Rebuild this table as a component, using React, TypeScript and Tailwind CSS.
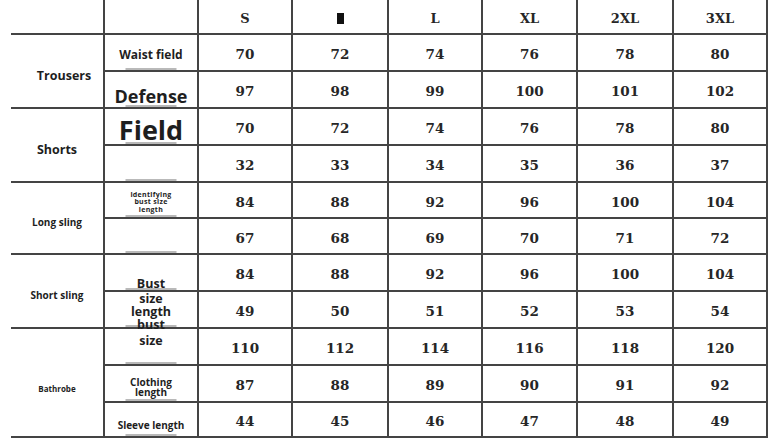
import React from "react";

const SANS = "font-['Open_Sans','Noto_Sans',sans-serif]";
const NUM = "font-['DejaVu_Serif','Liberation_Serif',serif]";

function NumRow({ vals }: { vals: (string | number)[] }) {
  return (
    <>
      {vals.map((v, i) => (
        <div
          key={i}
          className={`flex items-center justify-center border-r-2 border-b-2 border-[#444] pt-[4px] text-[13.5px] font-bold text-[#262626] ${NUM}`}
        >
          {v}
        </div>
      ))}
    </>
  );
}

function Bar() {
  return (
    <span className="absolute bottom-0 left-1/2 h-[2px] w-[51px] -translate-x-1/2 bg-[#b9b9b9]" />
  );
}

export default function App() {
  const cell =
    "relative flex justify-center border-r-2 border-b-2 border-[#444] text-center font-bold text-[#1e1e1e]";
  return (
    <div className="h-[442px] w-[770px] overflow-hidden bg-white">
      <div className={`pl-[11px] ${SANS}`}>
        <div className="grid grid-cols-[94px_94px_94px_96px_94px_95px_96px_94px] grid-rows-[35px_37px_37px_37px_37px_36px_36px_37px_37px_37px_37px_35px]">
          {/* header */}
          <div className="border-r-2 border-b-2 border-[#444]" />
          <div className="border-r-2 border-b-2 border-[#444]" />
          {["S", "M", "L", "XL", "2XL", "3XL"].map((h) => (
            <div
              key={h}
              className={`flex items-center justify-center border-r-2 border-b-2 border-[#444] pt-[4px] text-[13px] font-bold text-[#262626] ${NUM}`}
            >
              {h === "M" ? (
                <span aria-label="M" className="inline-block h-[11px] w-[7px] bg-[#111]" />
              ) : (
                h
              )}
            </div>
          ))}

          {/* Trousers */}
          <div className={`${cell} row-span-2 items-center pt-[11px] pl-[14px] text-[12.5px]`}>Trousers</div>
          <div className={`${cell} items-center pt-[5px] text-[12px]`}>
            <span className="relative z-10">Waist field</span>
            <Bar />
          </div>
          <NumRow vals={[70, 72, 74, 76, 78, 80]} />
          <div className={`${cell} items-center pt-[12px] text-[18px] leading-none`}>
            <span className="relative z-10">Defense</span>
            <Bar />
          </div>
          <NumRow vals={[97, 98, 99, 100, 101, 102]} />

          {/* Shorts */}
          <div className={`${cell} row-span-2 items-center pt-[10px] text-[12.5px]`}>Shorts</div>
          <div className={`${cell} items-center pt-[6px] text-[27px] leading-none`}>
            <span className="relative z-10">Field</span>
            <Bar />
          </div>
          <NumRow vals={[70, 72, 74, 76, 78, 80]} />
          <div className={cell}>
            <Bar />
          </div>
          <NumRow vals={[32, 33, 34, 35, 36, 37]} />

          {/* Long sling */}
          <div className={`${cell} row-span-2 items-center pt-[8px] text-[10px]`}>Long sling</div>
          <div className={`${cell} items-center pt-[4px] text-[7px] leading-[7.5px] tracking-[0.3px]`}>
            <span className="relative z-10">
              identifying
              <br />
              bust size
              <br />
              length
            </span>
            <Bar />
          </div>
          <NumRow vals={[84, 88, 92, 96, 100, 104]} />
          <div className={cell}>
            <Bar />
          </div>
          <NumRow vals={[67, 68, 69, 70, 71, 72]} />

          {/* Short sling */}
          <div className={`${cell} row-span-2 items-center pt-[8px] text-[10px]`}>Short sling</div>
          <div className={`${cell} items-end text-[12.5px] leading-[13px]`}>
            <span className="relative z-10">Bust</span>
            <Bar />
          </div>
          <NumRow vals={[84, 88, 92, 96, 100, 104]} />
          <div className={`${cell} items-start text-[12.5px] leading-[13px]`}>
            <span className="relative z-10">
              size
              <br />
              length
              <br />
              bust
            </span>
            <Bar />
          </div>
          <NumRow vals={[49, 50, 51, 52, 53, 54]} />

          {/* Bathrobe */}
          <div className={`${cell} row-span-3 items-center pt-[12px] text-[8px]`}>Bathrobe</div>
          <div className={`${cell} items-start pt-[5px] text-[12.5px] leading-[13px]`}>
            <span className="relative z-10">size</span>
            <Bar />
          </div>
          <NumRow vals={[110, 112, 114, 116, 118, 120]} />
          <div className={`${cell} items-center pt-[6px] text-[10px] leading-[10px]`}>
            <span className="relative z-10">
              Clothing
              <br />
              length
            </span>
            <Bar />
          </div>
          <NumRow vals={[87, 88, 89, 90, 91, 92]} />
          <div className={`${cell} items-center pt-[11px] text-[10px]`}>
            <span className="relative z-10">Sleeve length</span>
            <Bar />
          </div>
          <NumRow vals={[44, 45, 46, 47, 48, 49]} />
        </div>
      </div>
    </div>
  );
}
